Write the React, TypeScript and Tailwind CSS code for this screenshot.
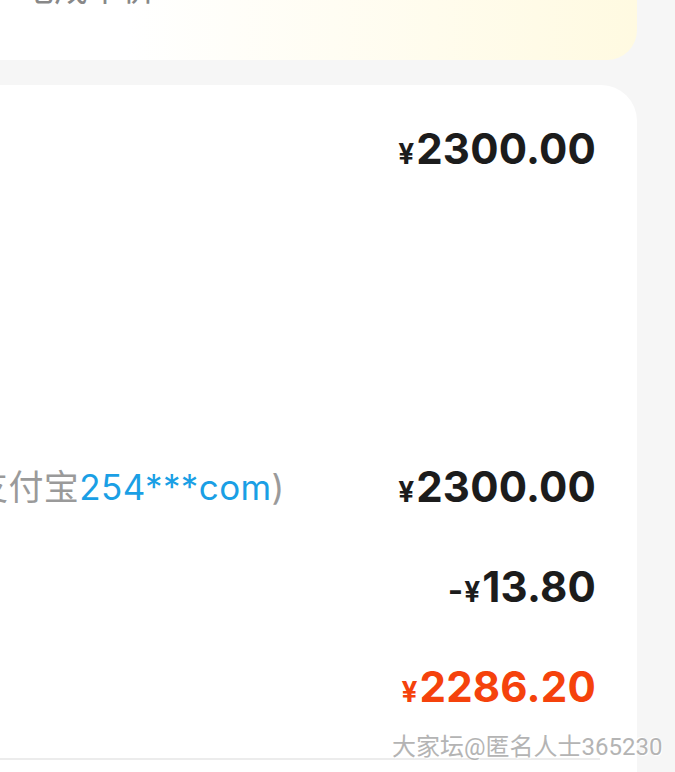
import React from 'react';

const font = { fontFamily: 'Inter, "Noto Sans CJK SC", sans-serif' };

const Amount = ({ value, sign, color }: { value: string; sign?: string; color: string }) => (
  <div className={`flex items-baseline font-bold leading-none ${color}`}>
    {sign && <span className="text-[33px] mr-[1px]">{sign}</span>}
    <span className="text-[28px] mr-[2px]">¥</span>
    <span className="text-[42px] tracking-[0.2px]">{value}</span>
  </div>
);

export default function App() {
  return (
    <div
      className="relative w-[675px] h-[772px] overflow-hidden bg-[#f6f6f6]"
      style={font}
    >
      {/* top card, mostly scrolled off */}
      <div className="w-[637px] h-[60px] rounded-br-[30px] bg-gradient-to-r from-white from-20% to-[#fffae1] overflow-hidden">
        <div className="pl-[20px] -mt-[28px] text-[34px] leading-[34px] text-[#888]">电成本价</div>
      </div>

      {/* detail card */}
      <div className="mt-[25px] w-[637px] h-[700px] bg-white rounded-tr-[36px] pr-[41px] pt-[14px]">
        <div className="h-[100px] flex items-center justify-end">
          <Amount value="2300.00" color="text-[#1c1c1c]" />
        </div>

        <div className="h-[238px]" />

        <div className="h-[100px] flex items-center justify-between">
          <div className="-ml-[27px] text-[35px] leading-none text-[#9a9a9a] tracking-[0.4px]">
            支付宝<span className="text-[#1a9fe5]">254***com</span>)
          </div>
          <Amount value="2300.00" color="text-[#1c1c1c]" />
        </div>

        <div className="h-[100px] flex items-center justify-end">
          <Amount value="13.80" sign="-" color="text-[#1c1c1c]" />
        </div>

        <div className="h-[100px] flex items-center justify-end">
          <Amount value="2286.20" color="text-[#f5420c]" />
        </div>

        <div className="mt-[21px] h-[2px] w-[600px] bg-[#ececec]" />
      </div>

      {/* watermark */}
      <div
        className="absolute left-[392px] top-[733px] text-[24px] leading-[28px] text-[#b4b4b4] whitespace-nowrap"
        style={{ fontFamily: 'Roboto, "Noto Sans CJK SC", sans-serif', textShadow: '1px 1px 0 #fff, -1px -1px 0 #fff' }}
      >
        大家坛@匿名人士365230
      </div>
    </div>
  );
}
